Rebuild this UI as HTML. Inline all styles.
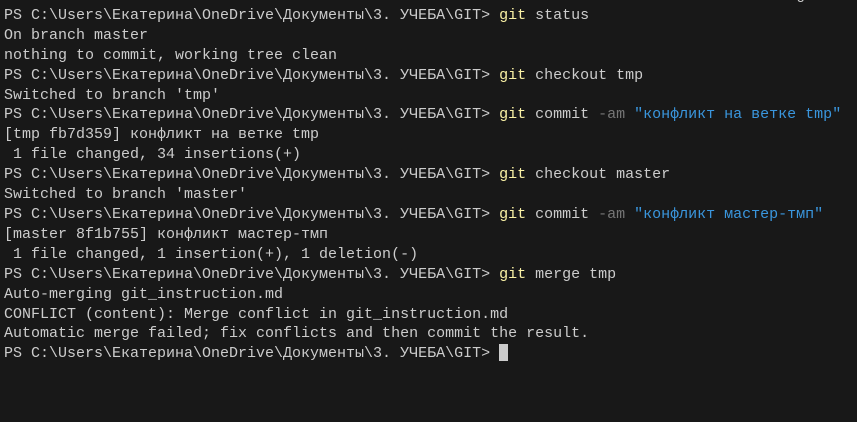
<!DOCTYPE html>
<html><head><meta charset="utf-8"><style>
html,body{margin:0;padding:0;background:#181818;width:857px;height:422px;overflow:hidden}
pre{position:absolute;left:4px;top:-14px;margin:0;font-family:"Liberation Mono",monospace;font-size:15px;line-height:19.9px;color:#cccccc;white-space:pre}
.y{color:#f9f1a5}.b{color:#3a96dd}.g{color:#767676}
.cur{display:inline-block;width:9px;height:17px;background:#cccccc;vertical-align:-4px}
</style></head><body><pre>                                                                                        g
PS C:\Users\Екатерина\OneDrive\Документы\3. УЧЕБА\GIT&gt; <span class="y">git</span> status
On branch master
nothing to commit, working tree clean
PS C:\Users\Екатерина\OneDrive\Документы\3. УЧЕБА\GIT&gt; <span class="y">git</span> checkout tmp
Switched to branch 'tmp'
PS C:\Users\Екатерина\OneDrive\Документы\3. УЧЕБА\GIT&gt; <span class="y">git</span> commit <span class="g">-am</span> <span class="b">"конфликт на ветке tmp"</span>
[tmp fb7d359] конфликт на ветке tmp
 1 file changed, 34 insertions(+)
PS C:\Users\Екатерина\OneDrive\Документы\3. УЧЕБА\GIT&gt; <span class="y">git</span> checkout master
Switched to branch 'master'
PS C:\Users\Екатерина\OneDrive\Документы\3. УЧЕБА\GIT&gt; <span class="y">git</span> commit <span class="g">-am</span> <span class="b">"конфликт мастер-тмп"</span>
[master 8f1b755] конфликт мастер-тмп
 1 file changed, 1 insertion(+), 1 deletion(-)
PS C:\Users\Екатерина\OneDrive\Документы\3. УЧЕБА\GIT&gt; <span class="y">git</span> merge tmp
Auto-merging git_instruction.md
CONFLICT (content): Merge conflict in git_instruction.md
Automatic merge failed; fix conflicts and then commit the result.
PS C:\Users\Екатерина\OneDrive\Документы\3. УЧЕБА\GIT&gt; <span class="cur"></span></pre></body></html>
